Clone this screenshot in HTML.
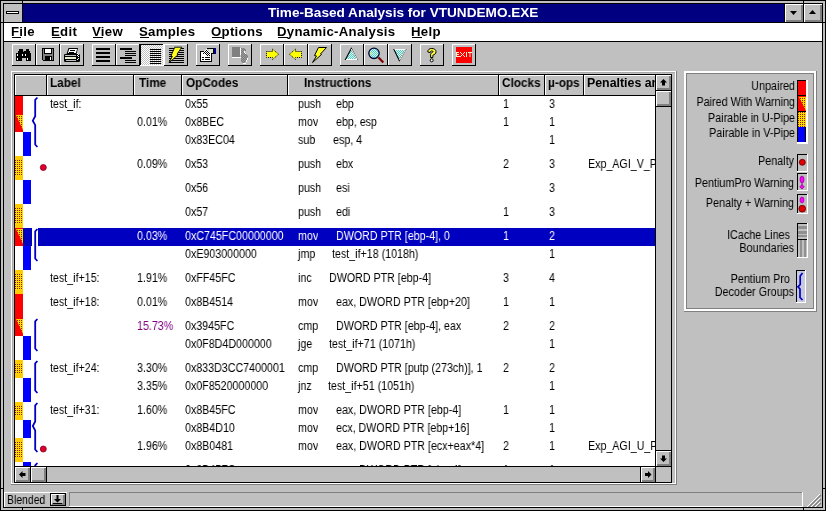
<!DOCTYPE html><html><head><meta charset="utf-8"><style>*{margin:0;padding:0}
html,body{width:826px;height:511px;overflow:hidden;background:#c0c0c0}
body{position:relative;font-family:"Liberation Sans",sans-serif}
div,svg{position:absolute}
.t{white-space:pre;transform-origin:0 0;will-change:transform}
</style></head><body><div style="left:0px;top:0px;width:826px;height:511px;background:#c0c0c0;"></div>
<div style="left:0px;top:0px;width:826px;height:1px;background:#000000;"></div>
<div style="left:0px;top:510px;width:826px;height:1px;background:#000000;"></div>
<div style="left:0px;top:0px;width:1px;height:511px;background:#000000;"></div>
<div style="left:825px;top:0px;width:1px;height:511px;background:#000000;"></div>
<div style="left:3px;top:3px;width:820px;height:1px;background:#000000;"></div>
<div style="left:3px;top:507px;width:820px;height:1px;background:#000000;"></div>
<div style="left:3px;top:3px;width:1px;height:505px;background:#000000;"></div>
<div style="left:822px;top:3px;width:1px;height:505px;background:#000000;"></div>
<div style="left:22px;top:0px;width:1px;height:4px;background:#000000;"></div>
<div style="left:803px;top:0px;width:1px;height:4px;background:#000000;"></div>
<div style="left:22px;top:507px;width:1px;height:4px;background:#000000;"></div>
<div style="left:803px;top:507px;width:1px;height:4px;background:#000000;"></div>
<div style="left:0px;top:22px;width:4px;height:1px;background:#000000;"></div>
<div style="left:822px;top:22px;width:4px;height:1px;background:#000000;"></div>
<div style="left:0px;top:488px;width:4px;height:1px;background:#000000;"></div>
<div style="left:822px;top:488px;width:4px;height:1px;background:#000000;"></div>
<div style="left:4px;top:4px;width:818px;height:18px;background:#000080;"></div>
<div style="left:4px;top:4px;width:18px;height:18px;background:#c0c0c0;"></div>
<div style="left:22px;top:4px;width:1px;height:18px;background:#000000;"></div>
<div style="left:6px;top:11px;width:13px;height:3px;background:#000000;"></div>
<div style="left:7px;top:12px;width:11px;height:1px;background:#ffffff;"></div>
<div style="left:784px;top:4px;width:1px;height:18px;background:#000000;"></div>
<div style="left:785px;top:4px;width:18px;height:18px;background:#c0c0c0;"></div>
<div style="left:785px;top:4px;width:18px;height:1px;background:#ffffff;"></div>
<div style="left:785px;top:4px;width:1px;height:18px;background:#ffffff;"></div>
<div style="left:801px;top:5px;width:2px;height:17px;background:#808080;"></div>
<div style="left:786px;top:20px;width:17px;height:2px;background:#808080;"></div>
<div style="left:804px;top:4px;width:18px;height:18px;background:#c0c0c0;"></div>
<div style="left:804px;top:4px;width:18px;height:1px;background:#ffffff;"></div>
<div style="left:804px;top:4px;width:1px;height:18px;background:#ffffff;"></div>
<div style="left:820px;top:5px;width:2px;height:17px;background:#808080;"></div>
<div style="left:805px;top:20px;width:17px;height:2px;background:#808080;"></div>
<div style="left:803px;top:4px;width:1px;height:18px;background:#000000;"></div>
<div style="left:4px;top:22px;width:818px;height:1px;background:#000000;"></div>
<svg style="left:785px;top:4px" width="40" height="18"><path d="M5 7h7l-3.5 4z M24 10h7l-3.5 -4z" fill="#000"/></svg>
<div class="t" style="left:268px;top:6.49px;font-size:13.6px;line-height:13.6px;font-weight:bold;color:#fff;transform:scaleX(1.0);">Time-Based Analysis for VTUNDEMO.EXE</div>
<div style="left:4px;top:23px;width:818px;height:18px;background:#ffffff;"></div>
<div style="left:4px;top:41px;width:818px;height:1px;background:#000000;"></div>
<div class="t" style="left:11.3px;top:24.83px;font-size:13.2px;line-height:13.2px;font-weight:bold;color:#000;transform:scaleX(1.0);letter-spacing:0.3px">File</div>
<div class="t" style="left:51.3px;top:24.83px;font-size:13.2px;line-height:13.2px;font-weight:bold;color:#000;transform:scaleX(1.0);letter-spacing:0.3px">Edit</div>
<div class="t" style="left:92.3px;top:24.83px;font-size:13.2px;line-height:13.2px;font-weight:bold;color:#000;transform:scaleX(1.0);letter-spacing:0.3px">View</div>
<div class="t" style="left:139.3px;top:24.83px;font-size:13.2px;line-height:13.2px;font-weight:bold;color:#000;transform:scaleX(1.0);letter-spacing:0.3px">Samples</div>
<div class="t" style="left:211.3px;top:24.83px;font-size:13.2px;line-height:13.2px;font-weight:bold;color:#000;transform:scaleX(1.0);letter-spacing:0.3px">Options</div>
<div class="t" style="left:277.3px;top:24.83px;font-size:13.2px;line-height:13.2px;font-weight:bold;color:#000;transform:scaleX(1.0);letter-spacing:0.3px">Dynamic-Analysis</div>
<div class="t" style="left:411.3px;top:24.83px;font-size:13.2px;line-height:13.2px;font-weight:bold;color:#000;transform:scaleX(1.0);letter-spacing:0.3px">Help</div>
<div style="left:12px;top:37px;width:9px;height:1px;background:#000000;"></div>
<div style="left:52px;top:37px;width:9px;height:1px;background:#000000;"></div>
<div style="left:93px;top:37px;width:10px;height:1px;background:#000000;"></div>
<div style="left:140px;top:37px;width:9px;height:1px;background:#000000;"></div>
<div style="left:212px;top:37px;width:10px;height:1px;background:#000000;"></div>
<div style="left:278px;top:37px;width:10px;height:1px;background:#000000;"></div>
<div style="left:412px;top:37px;width:10px;height:1px;background:#000000;"></div>
<div style="left:12px;top:44px;width:24px;height:22px;background:#c0c0c0;"></div>
<div style="left:12px;top:44px;width:24px;height:1px;background:#ffffff;"></div>
<div style="left:12px;top:44px;width:1px;height:22px;background:#ffffff;"></div>
<div style="left:12px;top:65px;width:24px;height:1px;background:#000000;"></div>
<div style="left:35px;top:44px;width:1px;height:22px;background:#000000;"></div>
<div style="left:36px;top:44px;width:24px;height:22px;background:#c0c0c0;"></div>
<div style="left:36px;top:44px;width:24px;height:1px;background:#ffffff;"></div>
<div style="left:36px;top:44px;width:1px;height:22px;background:#ffffff;"></div>
<div style="left:36px;top:65px;width:24px;height:1px;background:#000000;"></div>
<div style="left:59px;top:44px;width:1px;height:22px;background:#000000;"></div>
<div style="left:60px;top:44px;width:24px;height:22px;background:#c0c0c0;"></div>
<div style="left:60px;top:44px;width:24px;height:1px;background:#ffffff;"></div>
<div style="left:60px;top:44px;width:1px;height:22px;background:#ffffff;"></div>
<div style="left:60px;top:65px;width:24px;height:1px;background:#000000;"></div>
<div style="left:83px;top:44px;width:1px;height:22px;background:#000000;"></div>
<div style="left:92px;top:44px;width:24px;height:22px;background:#c0c0c0;"></div>
<div style="left:92px;top:44px;width:24px;height:1px;background:#ffffff;"></div>
<div style="left:92px;top:44px;width:1px;height:22px;background:#ffffff;"></div>
<div style="left:92px;top:65px;width:24px;height:1px;background:#000000;"></div>
<div style="left:115px;top:44px;width:1px;height:22px;background:#000000;"></div>
<div style="left:116px;top:44px;width:24px;height:22px;background:#c0c0c0;"></div>
<div style="left:116px;top:44px;width:24px;height:1px;background:#ffffff;"></div>
<div style="left:116px;top:44px;width:1px;height:22px;background:#ffffff;"></div>
<div style="left:116px;top:65px;width:24px;height:1px;background:#000000;"></div>
<div style="left:139px;top:44px;width:1px;height:22px;background:#000000;"></div>
<div style="left:140px;top:44px;width:24px;height:22px;background:#c0c0c0;"></div>
<div style="left:141px;top:45px;width:22px;height:20px;background-image:linear-gradient(45deg,#fff 25%,transparent 25%,transparent 75%,#fff 75%),linear-gradient(45deg,#fff 25%,transparent 25%,transparent 75%,#fff 75%);background-size:2px 2px;background-position:0 0,1px 1px;background-color:#c0c0c0"></div>
<div style="left:140px;top:44px;width:24px;height:1px;background:#000000;"></div>
<div style="left:140px;top:44px;width:1px;height:22px;background:#000000;"></div>
<div style="left:140px;top:65px;width:24px;height:1px;background:#ffffff;"></div>
<div style="left:163px;top:44px;width:1px;height:22px;background:#ffffff;"></div>
<div style="left:164px;top:44px;width:24px;height:22px;background:#c0c0c0;"></div>
<div style="left:164px;top:44px;width:24px;height:1px;background:#ffffff;"></div>
<div style="left:164px;top:44px;width:1px;height:22px;background:#ffffff;"></div>
<div style="left:164px;top:65px;width:24px;height:1px;background:#000000;"></div>
<div style="left:187px;top:44px;width:1px;height:22px;background:#000000;"></div>
<div style="left:196px;top:44px;width:24px;height:22px;background:#c0c0c0;"></div>
<div style="left:196px;top:44px;width:24px;height:1px;background:#ffffff;"></div>
<div style="left:196px;top:44px;width:1px;height:22px;background:#ffffff;"></div>
<div style="left:196px;top:65px;width:24px;height:1px;background:#000000;"></div>
<div style="left:219px;top:44px;width:1px;height:22px;background:#000000;"></div>
<div style="left:228px;top:44px;width:24px;height:22px;background:#c0c0c0;"></div>
<div style="left:228px;top:44px;width:24px;height:1px;background:#ffffff;"></div>
<div style="left:228px;top:44px;width:1px;height:22px;background:#ffffff;"></div>
<div style="left:228px;top:65px;width:24px;height:1px;background:#000000;"></div>
<div style="left:251px;top:44px;width:1px;height:22px;background:#000000;"></div>
<div style="left:260px;top:44px;width:24px;height:22px;background:#c0c0c0;"></div>
<div style="left:260px;top:44px;width:24px;height:1px;background:#ffffff;"></div>
<div style="left:260px;top:44px;width:1px;height:22px;background:#ffffff;"></div>
<div style="left:260px;top:65px;width:24px;height:1px;background:#000000;"></div>
<div style="left:283px;top:44px;width:1px;height:22px;background:#000000;"></div>
<div style="left:284px;top:44px;width:24px;height:22px;background:#c0c0c0;"></div>
<div style="left:284px;top:44px;width:24px;height:1px;background:#ffffff;"></div>
<div style="left:284px;top:44px;width:1px;height:22px;background:#ffffff;"></div>
<div style="left:284px;top:65px;width:24px;height:1px;background:#000000;"></div>
<div style="left:307px;top:44px;width:1px;height:22px;background:#000000;"></div>
<div style="left:308px;top:44px;width:24px;height:22px;background:#c0c0c0;"></div>
<div style="left:308px;top:44px;width:24px;height:1px;background:#ffffff;"></div>
<div style="left:308px;top:44px;width:1px;height:22px;background:#ffffff;"></div>
<div style="left:308px;top:65px;width:24px;height:1px;background:#000000;"></div>
<div style="left:331px;top:44px;width:1px;height:22px;background:#000000;"></div>
<div style="left:340px;top:44px;width:24px;height:22px;background:#c0c0c0;"></div>
<div style="left:340px;top:44px;width:24px;height:1px;background:#ffffff;"></div>
<div style="left:340px;top:44px;width:1px;height:22px;background:#ffffff;"></div>
<div style="left:340px;top:65px;width:24px;height:1px;background:#000000;"></div>
<div style="left:363px;top:44px;width:1px;height:22px;background:#000000;"></div>
<div style="left:364px;top:44px;width:24px;height:22px;background:#c0c0c0;"></div>
<div style="left:364px;top:44px;width:24px;height:1px;background:#ffffff;"></div>
<div style="left:364px;top:44px;width:1px;height:22px;background:#ffffff;"></div>
<div style="left:364px;top:65px;width:24px;height:1px;background:#000000;"></div>
<div style="left:387px;top:44px;width:1px;height:22px;background:#000000;"></div>
<div style="left:388px;top:44px;width:24px;height:22px;background:#c0c0c0;"></div>
<div style="left:388px;top:44px;width:24px;height:1px;background:#ffffff;"></div>
<div style="left:388px;top:44px;width:1px;height:22px;background:#ffffff;"></div>
<div style="left:388px;top:65px;width:24px;height:1px;background:#000000;"></div>
<div style="left:411px;top:44px;width:1px;height:22px;background:#000000;"></div>
<div style="left:420px;top:44px;width:24px;height:22px;background:#c0c0c0;"></div>
<div style="left:420px;top:44px;width:24px;height:1px;background:#ffffff;"></div>
<div style="left:420px;top:44px;width:1px;height:22px;background:#ffffff;"></div>
<div style="left:420px;top:65px;width:24px;height:1px;background:#000000;"></div>
<div style="left:443px;top:44px;width:1px;height:22px;background:#000000;"></div>
<div style="left:452px;top:44px;width:24px;height:22px;background:#c0c0c0;"></div>
<div style="left:452px;top:44px;width:24px;height:1px;background:#ffffff;"></div>
<div style="left:452px;top:44px;width:1px;height:22px;background:#ffffff;"></div>
<div style="left:452px;top:65px;width:24px;height:1px;background:#000000;"></div>
<div style="left:475px;top:44px;width:1px;height:22px;background:#000000;"></div>
<svg style="left:12px;top:44px" width="24" height="22"><path d="M7 5h4v2h-4z M14 5h3v2h-3z M6 7h12v2h-12z M4 9h6v8h-6z M14 9h5v8h-5z M9 9h5v5h-5z" fill="#000"/><path d="M5 10h1v2h-1z M5 14h1v2h-1z M10 10h1v2h-1z M13 10h1v2h-1z M15 14h1v2h-1z" fill="#fff"/><rect x="11" y="7" width="1" height="1" fill="#808080"/></svg>
<svg style="left:36px;top:44px" width="24" height="22"><rect x="6" y="4" width="12" height="13" fill="#000"/><rect x="7" y="5" width="10" height="11" fill="#808080"/><rect x="8" y="5" width="8" height="5" fill="#000"/><rect x="9" y="5" width="6" height="4" fill="#fff"/><rect x="9" y="12" width="7" height="5" fill="#000"/><rect x="14" y="13" width="1" height="3" fill="#fff"/><rect x="6" y="16" width="1" height="1" fill="#c0c0c0"/></svg>
<svg style="left:60px;top:44px" width="24" height="22"><path d="M8.5 4h9.5l-1.5 6h-10z" fill="#000"/><path d="M9.3 5h7.8l-1.2 4h-8z" fill="#fff"/><rect x="10" y="6" width="5" height="1" fill="#000"/><rect x="9" y="8" width="5" height="1" fill="#000"/><rect x="4" y="10" width="16" height="8" rx="1.2" fill="#000"/><rect x="5" y="11" width="11" height="1" fill="#c0c0c0"/><rect x="5" y="13" width="11" height="2" fill="#e8ecd0"/><rect x="6" y="16" width="10" height="1" fill="#c0c0c0"/><path d="M17 9h1v1h-1z M18 10h1v1h-1z M17 11h1v1h-1z M18 12h1v1h-1z M17 15h1v1h-1z M18 14h1v1h-1z" fill="#fff"/></svg>
<svg style="left:92px;top:44px" width="24" height="22"><path d="M4 4h14v2h-14z M4 8h14v2h-14z M4 12h14v2h-14z M4 16h14v2h-14z" fill="#000"/></svg>
<svg style="left:116px;top:44px" width="24" height="22"><path d="M4 4h12v2h-12z M9 7h11v1h-11z M9 9h11v1h-11z M9 11h11v1h-11z M4 13h12v2h-12z M9 16h11v1h-11z M9 18h11v1h-11z" fill="#000"/></svg>
<svg style="left:140px;top:44px" width="24" height="22"><path d="M10 5h11v1h-11z M10 7h11v1h-11z M10 9h11v1h-11z M10 11h11v1h-11z M10 13h11v1h-11z M10 15h11v1h-11z M10 17h11v1h-11z M10 19h11v1h-11z" fill="#000"/></svg>
<svg style="left:164px;top:44px" width="24" height="22"><path d="M5 4h15v1h-15z M5 6h15v1h-15z M5 8h15v1h-15z M5 10h15v1h-15z M5 12h15v1h-15z M5 14h15v1h-15z M5 16h15v1h-15z M5 18h15v1h-15z" fill="#000"/><path d="M10.8 3.2L17.8 3.2L13 10.2L14.2 10.6L5 18.8L8.3 12.2L7 11.8Z" fill="#ffff20" stroke="#000" stroke-width="0.9"/></svg>
<svg style="left:196px;top:44px" width="24" height="22"><rect x="4" y="7" width="12" height="11" fill="#000"/><rect x="5" y="8" width="10" height="9" fill="#fff"/><rect x="11" y="4" width="6" height="1" fill="#000"/><rect x="13" y="5" width="4" height="4" fill="#d8e4cc"/><rect x="13" y="9" width="4" height="1" fill="#000"/><rect x="17" y="4" width="1" height="6" fill="#000"/><rect x="18" y="4" width="2" height="6" fill="#000080"/><rect x="10" y="5" width="1" height="1" fill="#fff"/><rect x="9" y="6" width="1" height="1" fill="#fff"/><rect x="10" y="6" width="1" height="1" fill="#000"/><rect x="11" y="6" width="1" height="1" fill="#fff"/><rect x="8" y="7" width="1" height="1" fill="#fff"/><rect x="9" y="7" width="1" height="1" fill="#000"/><rect x="10" y="7" width="1" height="1" fill="#fff"/><rect x="11" y="7" width="1" height="1" fill="#000"/><rect x="12" y="7" width="1" height="1" fill="#fff"/><rect x="7" y="8" width="1" height="1" fill="#fff"/><rect x="8" y="8" width="1" height="1" fill="#000"/><rect x="9" y="8" width="1" height="1" fill="#fff"/><rect x="10" y="8" width="1" height="1" fill="#000"/><rect x="11" y="8" width="1" height="1" fill="#fff"/><rect x="12" y="8" width="1" height="1" fill="#000"/><rect x="13" y="8" width="1" height="1" fill="#fff"/><rect x="6" y="9" width="1" height="1" fill="#fff"/><rect x="7" y="9" width="1" height="1" fill="#000"/><rect x="8" y="9" width="1" height="1" fill="#fff"/><rect x="9" y="9" width="1" height="1" fill="#000"/><rect x="10" y="9" width="1" height="1" fill="#fff"/><rect x="11" y="9" width="1" height="1" fill="#000"/><rect x="12" y="9" width="1" height="1" fill="#fff"/><rect x="13" y="9" width="1" height="1" fill="#000"/><rect x="14" y="9" width="1" height="1" fill="#fff"/><rect x="9" y="10" width="1" height="1" fill="#fff"/><rect x="10" y="10" width="1" height="1" fill="#000"/><rect x="11" y="10" width="1" height="1" fill="#fff"/><rect x="12" y="10" width="1" height="1" fill="#000"/><rect x="13" y="10" width="1" height="1" fill="#fff"/><rect x="11" y="11" width="1" height="1" fill="#000"/><rect x="12" y="11" width="1" height="1" fill="#fff"/><rect x="13" y="11" width="1" height="1" fill="#000"/><rect x="6" y="13" width="2" height="1" fill="#000"/><rect x="9" y="13" width="5" height="1" fill="#000"/><rect x="6" y="15" width="2" height="1" fill="#000"/><rect x="9" y="15" width="5" height="1" fill="#000"/></svg>
<svg style="left:228px;top:44px" width="24" height="22"><rect x="4" y="3" width="8" height="10" fill="#808080"/><rect x="4" y="13" width="9" height="1" fill="#fff"/><rect x="12" y="4" width="1" height="7" fill="#fff"/><rect x="13" y="4" width="4" height="1" fill="#7c7c7c"/><rect x="14" y="4" width="1" height="1" fill="#9a9a9a"/><rect x="16" y="4" width="1" height="1" fill="#9a9a9a"/><rect x="13" y="5" width="5" height="1" fill="#7c7c7c"/><rect x="13" y="5" width="1" height="1" fill="#9a9a9a"/><rect x="15" y="5" width="1" height="1" fill="#9a9a9a"/><rect x="17" y="5" width="1" height="1" fill="#9a9a9a"/><rect x="13" y="6" width="5" height="1" fill="#7c7c7c"/><rect x="14" y="6" width="1" height="1" fill="#9a9a9a"/><rect x="16" y="6" width="1" height="1" fill="#9a9a9a"/><rect x="13" y="7" width="3" height="1" fill="#7c7c7c"/><rect x="13" y="7" width="1" height="1" fill="#9a9a9a"/><rect x="15" y="7" width="1" height="1" fill="#9a9a9a"/><rect x="13" y="8" width="3" height="1" fill="#7c7c7c"/><rect x="14" y="8" width="1" height="1" fill="#9a9a9a"/><rect x="13" y="9" width="4" height="1" fill="#7c7c7c"/><rect x="13" y="9" width="1" height="1" fill="#9a9a9a"/><rect x="15" y="9" width="1" height="1" fill="#9a9a9a"/><rect x="13" y="10" width="6" height="1" fill="#7c7c7c"/><rect x="14" y="10" width="1" height="1" fill="#9a9a9a"/><rect x="16" y="10" width="1" height="1" fill="#9a9a9a"/><rect x="18" y="10" width="1" height="1" fill="#9a9a9a"/><rect x="13" y="11" width="7" height="1" fill="#7c7c7c"/><rect x="13" y="11" width="1" height="1" fill="#9a9a9a"/><rect x="15" y="11" width="1" height="1" fill="#9a9a9a"/><rect x="17" y="11" width="1" height="1" fill="#9a9a9a"/><rect x="19" y="11" width="1" height="1" fill="#9a9a9a"/><rect x="13" y="12" width="7" height="1" fill="#7c7c7c"/><rect x="14" y="12" width="1" height="1" fill="#9a9a9a"/><rect x="16" y="12" width="1" height="1" fill="#9a9a9a"/><rect x="18" y="12" width="1" height="1" fill="#9a9a9a"/><rect x="13" y="13" width="7" height="1" fill="#7c7c7c"/><rect x="13" y="13" width="1" height="1" fill="#9a9a9a"/><rect x="15" y="13" width="1" height="1" fill="#9a9a9a"/><rect x="17" y="13" width="1" height="1" fill="#9a9a9a"/><rect x="19" y="13" width="1" height="1" fill="#9a9a9a"/><rect x="13" y="14" width="6" height="1" fill="#7c7c7c"/><rect x="14" y="14" width="1" height="1" fill="#9a9a9a"/><rect x="16" y="14" width="1" height="1" fill="#9a9a9a"/><rect x="18" y="14" width="1" height="1" fill="#9a9a9a"/><rect x="13" y="15" width="6" height="1" fill="#7c7c7c"/><rect x="13" y="15" width="1" height="1" fill="#9a9a9a"/><rect x="15" y="15" width="1" height="1" fill="#9a9a9a"/><rect x="17" y="15" width="1" height="1" fill="#9a9a9a"/><rect x="13" y="16" width="5" height="1" fill="#7c7c7c"/><rect x="14" y="16" width="1" height="1" fill="#9a9a9a"/><rect x="16" y="16" width="1" height="1" fill="#9a9a9a"/><rect x="13" y="17" width="5" height="1" fill="#7c7c7c"/><rect x="13" y="17" width="1" height="1" fill="#9a9a9a"/><rect x="15" y="17" width="1" height="1" fill="#9a9a9a"/><rect x="17" y="17" width="1" height="1" fill="#9a9a9a"/><rect x="14" y="18" width="3" height="1" fill="#7c7c7c"/><rect x="14" y="18" width="1" height="1" fill="#9a9a9a"/><rect x="16" y="18" width="1" height="1" fill="#9a9a9a"/><rect x="16" y="7" width="1" height="2" fill="#fff"/><rect x="17" y="9" width="1" height="1" fill="#fff"/><rect x="19" y="14" width="1" height="2" fill="#fff"/><rect x="18" y="16" width="1" height="2" fill="#fff"/><rect x="15" y="19" width="3" height="1" fill="#fff"/></svg>
<svg style="left:260px;top:44px" width="24" height="22"><path d="M6.5 7.5h6v-2.5l6 5.3-6 5.2v-2h-6z" fill="#ffff00" stroke="#000" stroke-width="1" stroke-dasharray="1 1"/></svg>
<svg style="left:284px;top:44px" width="24" height="22"><path d="M17.5 7.5h-6v-2.5l-6 5.3 6 5.2v-2h6z" fill="#ffff00" stroke="#000" stroke-width="1" stroke-dasharray="1 1"/></svg>
<svg style="left:308px;top:44px" width="24" height="22"><path d="M10.5 3.5L18.5 3.5L12.5 10L13.5 10.5L4.5 18.5L8.5 12L6.5 11.5Z" fill="#ffff20" stroke="#000" stroke-width="1"/></svg>
<svg style="left:340px;top:44px" width="24" height="22"><defs><pattern id="cy" width="2" height="2" patternUnits="userSpaceOnUse"><rect width="2" height="2" fill="#d8f8f0"/><rect width="1" height="1" fill="#50d0c8"/><rect x="1" y="1" width="1" height="1" fill="#50d0c8"/></pattern></defs><path d="M11.3 4.5L5.5 15.5H17z" fill="url(#cy)" stroke="#000" stroke-width="1.1"/><path d="M11.3 5L17 15.5H6" fill="none" stroke="#fff" stroke-width="1"/></svg>
<svg style="left:364px;top:44px" width="24" height="22"><path d="M14.5 13.5l4.8 5" stroke="#800000" stroke-width="2.2"/><circle cx="10" cy="9.3" r="5.2" fill="url(#cy)" stroke="#000030" stroke-width="1.3"/><rect x="6" y="8" width="2" height="3" fill="#e0f080" opacity="0.6"/></svg>
<svg style="left:388px;top:44px" width="24" height="22"><path d="M6 5.5H17.5L11.3 16.5z" fill="url(#cy)" stroke="#000" stroke-width="1.1"/><path d="M6.5 5.5H17.5L11.5 16" fill="none" stroke="#fff" stroke-width="1"/></svg>
<svg style="left:420px;top:44px" width="24" height="22"><path d="M7.8 8C7.8 5.4 9.5 4.5 11.8 4.5C14.3 4.5 16 5.6 16 7.8C16 9.7 14.6 10.5 12.9 11.2V13.5H10.6V10.3C10.6 9.4 11.4 8.9 12.4 8.4C13.3 8 13.4 6.9 11.8 6.9C10.7 6.9 10.2 7.5 10.2 8.5Z" fill="#ffff40" stroke="#000" stroke-width="1"/><circle cx="11.7" cy="16.3" r="1.5" fill="#fffff0" stroke="#000" stroke-width="1"/></svg>
<svg style="left:452px;top:44px" width="24" height="22"><rect x="4" y="3" width="16" height="16" fill="#ff0000"/><path d="M4 8h3v1h-2v1h2v1h-2v1h3v1h-4z M8 8h1v1h1v1h1v-1h1v-1h1v1h-1v1h-1v1h1v1h1v1h-1v-1h-1v-1h-1v1h-1v1h-1v-1h1v-1h1v-1h-1v-1h-1z M14 8h1v5h-1z M16 8h4v1h-1.5v4h-1v-4h-1.5z" fill="#f8f0d0"/></svg>
<div style="left:11px;top:71px;width:665px;height:1px;background:#ffffff;"></div>
<div style="left:11px;top:483px;width:665px;height:1px;background:#ffffff;"></div>
<div style="left:11px;top:71px;width:1px;height:413px;background:#ffffff;"></div>
<div style="left:675px;top:71px;width:1px;height:413px;background:#ffffff;"></div>
<div style="left:12px;top:72px;width:663px;height:1px;background:#a8a8a8;"></div>
<div style="left:12px;top:72px;width:1px;height:411px;background:#a8a8a8;"></div>
<div style="left:11px;top:484px;width:666px;height:1px;background:#808080;"></div>
<div style="left:676px;top:71px;width:1px;height:414px;background:#808080;"></div>
<div style="left:14px;top:74px;width:658px;height:1px;background:#000000;"></div>
<div style="left:14px;top:482px;width:658px;height:1px;background:#000000;"></div>
<div style="left:14px;top:74px;width:1px;height:409px;background:#000000;"></div>
<div style="left:671px;top:74px;width:1px;height:409px;background:#000000;"></div>
<div style="left:15px;top:75px;width:640px;height:391px;background:#ffffff;"></div>
<div style="left:15px;top:95px;width:640px;height:1px;background:#000000;"></div>
<div style="left:15px;top:75px;width:32px;height:20px;background:#c0c0c0;"></div>
<div style="left:15px;top:75px;width:32px;height:1px;background:#ffffff;"></div>
<div style="left:15px;top:75px;width:1px;height:20px;background:#ffffff;"></div>
<div style="left:46px;top:75px;width:1px;height:20px;background:#000000;"></div>
<div style="left:47px;top:75px;width:87px;height:20px;background:#c0c0c0;"></div>
<div style="left:47px;top:75px;width:87px;height:1px;background:#ffffff;"></div>
<div style="left:47px;top:75px;width:1px;height:20px;background:#ffffff;"></div>
<div style="left:133px;top:75px;width:1px;height:20px;background:#000000;"></div>
<div style="left:134px;top:75px;width:48px;height:20px;background:#c0c0c0;"></div>
<div style="left:134px;top:75px;width:48px;height:1px;background:#ffffff;"></div>
<div style="left:134px;top:75px;width:1px;height:20px;background:#ffffff;"></div>
<div style="left:181px;top:75px;width:1px;height:20px;background:#000000;"></div>
<div style="left:182px;top:75px;width:106px;height:20px;background:#c0c0c0;"></div>
<div style="left:182px;top:75px;width:106px;height:1px;background:#ffffff;"></div>
<div style="left:182px;top:75px;width:1px;height:20px;background:#ffffff;"></div>
<div style="left:287px;top:75px;width:1px;height:20px;background:#000000;"></div>
<div style="left:288px;top:75px;width:211px;height:20px;background:#c0c0c0;"></div>
<div style="left:288px;top:75px;width:211px;height:1px;background:#ffffff;"></div>
<div style="left:288px;top:75px;width:1px;height:20px;background:#ffffff;"></div>
<div style="left:498px;top:75px;width:1px;height:20px;background:#000000;"></div>
<div style="left:499px;top:75px;width:46px;height:20px;background:#c0c0c0;"></div>
<div style="left:499px;top:75px;width:46px;height:1px;background:#ffffff;"></div>
<div style="left:499px;top:75px;width:1px;height:20px;background:#ffffff;"></div>
<div style="left:544px;top:75px;width:1px;height:20px;background:#000000;"></div>
<div style="left:545px;top:75px;width:39px;height:20px;background:#c0c0c0;"></div>
<div style="left:545px;top:75px;width:39px;height:1px;background:#ffffff;"></div>
<div style="left:545px;top:75px;width:1px;height:20px;background:#ffffff;"></div>
<div style="left:583px;top:75px;width:1px;height:20px;background:#000000;"></div>
<div style="left:584px;top:75px;width:71px;height:20px;background:#c0c0c0;"></div>
<div style="left:584px;top:75px;width:71px;height:1px;background:#ffffff;"></div>
<div style="left:584px;top:75px;width:1px;height:20px;background:#ffffff;"></div>
<div style="left:15px;top:75px;width:640px;height:20px;overflow:hidden">
<div class="t" style="left:35.0px;top:1.7400000000000055px;font-size:12px;line-height:12px;font-weight:bold;color:#000;transform:scaleX(0.98);">Label</div>
<div class="t" style="left:123.5px;top:1.7400000000000055px;font-size:12px;line-height:12px;font-weight:bold;color:#000;transform:scaleX(0.98);">Time</div>
<div class="t" style="left:170.5px;top:1.7400000000000055px;font-size:12px;line-height:12px;font-weight:bold;color:#000;transform:scaleX(0.98);">OpCodes</div>
<div class="t" style="left:288.5px;top:1.7400000000000055px;font-size:12px;line-height:12px;font-weight:bold;color:#000;transform:scaleX(0.98);">Instructions</div>
<div class="t" style="left:487.0px;top:1.7400000000000055px;font-size:12px;line-height:12px;font-weight:bold;color:#000;transform:scaleX(0.98);">Clocks</div>
<div class="t" style="left:533.0px;top:1.7400000000000055px;font-size:12px;line-height:12px;font-weight:bold;color:#000;transform:scaleX(0.98);">µ-ops</div>
<div class="t" style="left:572.0px;top:1.7400000000000055px;font-size:12px;line-height:12px;font-weight:bold;color:#000;transform:scaleX(1.03);">Penalties and</div>
</div>
<div style="left:15px;top:96px;width:640px;height:370px;overflow:hidden">
<div style="left:8px;top:132px;width:9px;height:18px;background:#0000c0;"></div>
<div style="left:23px;top:132px;width:617px;height:18px;background:#0000c0;"></div>
<div class="t" style="left:35.2px;top:2.34px;font-size:12px;line-height:12px;font-weight:normal;color:#000;transform:scaleX(0.89);">test_if:</div>
<div class="t" style="left:170.2px;top:2.34px;font-size:12px;line-height:12px;font-weight:normal;color:#000;transform:scaleX(0.89);">0x55</div>
<div class="t" style="left:282.7px;top:2.34px;font-size:12px;line-height:12px;font-weight:normal;color:#000;transform:scaleX(0.89);">push</div>
<div class="t" style="left:320.5px;top:2.34px;font-size:12px;line-height:12px;font-weight:normal;color:#000;transform:scaleX(0.89);">ebp</div>
<div class="t" style="left:487.7px;top:2.34px;font-size:12px;line-height:12px;font-weight:normal;color:#000;transform:scaleX(0.89);">1</div>
<div class="t" style="left:533.7px;top:2.34px;font-size:12px;line-height:12px;font-weight:normal;color:#000;transform:scaleX(0.89);">3</div>
<div class="t" style="left:122.2px;top:20.34px;font-size:12px;line-height:12px;font-weight:normal;color:#000;transform:scaleX(0.89);">0.01%</div>
<div class="t" style="left:170.2px;top:20.34px;font-size:12px;line-height:12px;font-weight:normal;color:#000;transform:scaleX(0.89);">0x8BEC</div>
<div class="t" style="left:282.7px;top:20.34px;font-size:12px;line-height:12px;font-weight:normal;color:#000;transform:scaleX(0.89);">mov</div>
<div class="t" style="left:320.5px;top:20.34px;font-size:12px;line-height:12px;font-weight:normal;color:#000;transform:scaleX(0.89);">ebp, esp</div>
<div class="t" style="left:487.7px;top:20.34px;font-size:12px;line-height:12px;font-weight:normal;color:#000;transform:scaleX(0.89);">1</div>
<div class="t" style="left:533.7px;top:20.34px;font-size:12px;line-height:12px;font-weight:normal;color:#000;transform:scaleX(0.89);">1</div>
<div class="t" style="left:170.2px;top:38.34px;font-size:12px;line-height:12px;font-weight:normal;color:#000;transform:scaleX(0.89);">0x83EC04</div>
<div class="t" style="left:282.7px;top:38.34px;font-size:12px;line-height:12px;font-weight:normal;color:#000;transform:scaleX(0.89);">sub</div>
<div class="t" style="left:317.59999999999997px;top:38.34px;font-size:12px;line-height:12px;font-weight:normal;color:#000;transform:scaleX(0.89);">esp, 4</div>
<div class="t" style="left:533.7px;top:38.34px;font-size:12px;line-height:12px;font-weight:normal;color:#000;transform:scaleX(0.89);">1</div>
<div class="t" style="left:122.2px;top:62.34px;font-size:12px;line-height:12px;font-weight:normal;color:#000;transform:scaleX(0.89);">0.09%</div>
<div class="t" style="left:170.2px;top:62.34px;font-size:12px;line-height:12px;font-weight:normal;color:#000;transform:scaleX(0.89);">0x53</div>
<div class="t" style="left:282.7px;top:62.34px;font-size:12px;line-height:12px;font-weight:normal;color:#000;transform:scaleX(0.89);">push</div>
<div class="t" style="left:320.5px;top:62.34px;font-size:12px;line-height:12px;font-weight:normal;color:#000;transform:scaleX(0.89);">ebx</div>
<div class="t" style="left:487.7px;top:62.34px;font-size:12px;line-height:12px;font-weight:normal;color:#000;transform:scaleX(0.89);">2</div>
<div class="t" style="left:533.7px;top:62.34px;font-size:12px;line-height:12px;font-weight:normal;color:#000;transform:scaleX(0.89);">3</div>
<div class="t" style="left:572.7px;top:62.34px;font-size:12px;line-height:12px;font-weight:normal;color:#000;transform:scaleX(0.89);">Exp_AGI_V_P</div>
<div class="t" style="left:170.2px;top:86.34px;font-size:12px;line-height:12px;font-weight:normal;color:#000;transform:scaleX(0.89);">0x56</div>
<div class="t" style="left:282.7px;top:86.34px;font-size:12px;line-height:12px;font-weight:normal;color:#000;transform:scaleX(0.89);">push</div>
<div class="t" style="left:320.5px;top:86.34px;font-size:12px;line-height:12px;font-weight:normal;color:#000;transform:scaleX(0.89);">esi</div>
<div class="t" style="left:533.7px;top:86.34px;font-size:12px;line-height:12px;font-weight:normal;color:#000;transform:scaleX(0.89);">3</div>
<div class="t" style="left:170.2px;top:110.34px;font-size:12px;line-height:12px;font-weight:normal;color:#000;transform:scaleX(0.89);">0x57</div>
<div class="t" style="left:282.7px;top:110.34px;font-size:12px;line-height:12px;font-weight:normal;color:#000;transform:scaleX(0.89);">push</div>
<div class="t" style="left:320.5px;top:110.34px;font-size:12px;line-height:12px;font-weight:normal;color:#000;transform:scaleX(0.89);">edi</div>
<div class="t" style="left:487.7px;top:110.34px;font-size:12px;line-height:12px;font-weight:normal;color:#000;transform:scaleX(0.89);">1</div>
<div class="t" style="left:533.7px;top:110.34px;font-size:12px;line-height:12px;font-weight:normal;color:#000;transform:scaleX(0.89);">3</div>
<div class="t" style="left:122.2px;top:134.34px;font-size:12px;line-height:12px;font-weight:normal;color:#fff;transform:scaleX(0.89);">0.03%</div>
<div class="t" style="left:170.2px;top:134.34px;font-size:12px;line-height:12px;font-weight:normal;color:#fff;transform:scaleX(0.89);">0xC745FC00000000</div>
<div class="t" style="left:282.7px;top:134.34px;font-size:12px;line-height:12px;font-weight:normal;color:#fff;transform:scaleX(0.89);">mov</div>
<div class="t" style="left:320.5px;top:134.34px;font-size:12px;line-height:12px;font-weight:normal;color:#fff;transform:scaleX(0.89);">DWORD PTR [ebp-4], 0</div>
<div class="t" style="left:487.7px;top:134.34px;font-size:12px;line-height:12px;font-weight:normal;color:#fff;transform:scaleX(0.89);">1</div>
<div class="t" style="left:533.7px;top:134.34px;font-size:12px;line-height:12px;font-weight:normal;color:#fff;transform:scaleX(0.89);">2</div>
<div class="t" style="left:170.2px;top:152.34px;font-size:12px;line-height:12px;font-weight:normal;color:#000;transform:scaleX(0.89);">0xE903000000</div>
<div class="t" style="left:282.7px;top:152.34px;font-size:12px;line-height:12px;font-weight:normal;color:#000;transform:scaleX(0.89);">jmp</div>
<div class="t" style="left:316.7px;top:152.34px;font-size:12px;line-height:12px;font-weight:normal;color:#000;transform:scaleX(0.89);">test_if+18 (1018h)</div>
<div class="t" style="left:533.7px;top:152.34px;font-size:12px;line-height:12px;font-weight:normal;color:#000;transform:scaleX(0.89);">1</div>
<div class="t" style="left:35.2px;top:176.34px;font-size:12px;line-height:12px;font-weight:normal;color:#000;transform:scaleX(0.89);">test_if+15:</div>
<div class="t" style="left:122.2px;top:176.34px;font-size:12px;line-height:12px;font-weight:normal;color:#000;transform:scaleX(0.89);">1.91%</div>
<div class="t" style="left:170.2px;top:176.34px;font-size:12px;line-height:12px;font-weight:normal;color:#000;transform:scaleX(0.89);">0xFF45FC</div>
<div class="t" style="left:282.7px;top:176.34px;font-size:12px;line-height:12px;font-weight:normal;color:#000;transform:scaleX(0.89);">inc</div>
<div class="t" style="left:314.09999999999997px;top:176.34px;font-size:12px;line-height:12px;font-weight:normal;color:#000;transform:scaleX(0.89);">DWORD PTR [ebp-4]</div>
<div class="t" style="left:487.7px;top:176.34px;font-size:12px;line-height:12px;font-weight:normal;color:#000;transform:scaleX(0.89);">3</div>
<div class="t" style="left:533.7px;top:176.34px;font-size:12px;line-height:12px;font-weight:normal;color:#000;transform:scaleX(0.89);">4</div>
<div class="t" style="left:35.2px;top:200.34px;font-size:12px;line-height:12px;font-weight:normal;color:#000;transform:scaleX(0.89);">test_if+18:</div>
<div class="t" style="left:122.2px;top:200.34px;font-size:12px;line-height:12px;font-weight:normal;color:#000;transform:scaleX(0.89);">0.01%</div>
<div class="t" style="left:170.2px;top:200.34px;font-size:12px;line-height:12px;font-weight:normal;color:#000;transform:scaleX(0.89);">0x8B4514</div>
<div class="t" style="left:282.7px;top:200.34px;font-size:12px;line-height:12px;font-weight:normal;color:#000;transform:scaleX(0.89);">mov</div>
<div class="t" style="left:320.5px;top:200.34px;font-size:12px;line-height:12px;font-weight:normal;color:#000;transform:scaleX(0.89);">eax, DWORD PTR [ebp+20]</div>
<div class="t" style="left:487.7px;top:200.34px;font-size:12px;line-height:12px;font-weight:normal;color:#000;transform:scaleX(0.89);">1</div>
<div class="t" style="left:533.7px;top:200.34px;font-size:12px;line-height:12px;font-weight:normal;color:#000;transform:scaleX(0.89);">1</div>
<div class="t" style="left:122.2px;top:224.34px;font-size:12px;line-height:12px;font-weight:normal;color:#800080;transform:scaleX(0.89);">15.73%</div>
<div class="t" style="left:170.2px;top:224.34px;font-size:12px;line-height:12px;font-weight:normal;color:#000;transform:scaleX(0.89);">0x3945FC</div>
<div class="t" style="left:282.7px;top:224.34px;font-size:12px;line-height:12px;font-weight:normal;color:#000;transform:scaleX(0.89);">cmp</div>
<div class="t" style="left:320.5px;top:224.34px;font-size:12px;line-height:12px;font-weight:normal;color:#000;transform:scaleX(0.89);">DWORD PTR [ebp-4], eax</div>
<div class="t" style="left:487.7px;top:224.34px;font-size:12px;line-height:12px;font-weight:normal;color:#000;transform:scaleX(0.89);">2</div>
<div class="t" style="left:533.7px;top:224.34px;font-size:12px;line-height:12px;font-weight:normal;color:#000;transform:scaleX(0.89);">2</div>
<div class="t" style="left:170.2px;top:242.34px;font-size:12px;line-height:12px;font-weight:normal;color:#000;transform:scaleX(0.89);">0x0F8D4D000000</div>
<div class="t" style="left:282.7px;top:242.34px;font-size:12px;line-height:12px;font-weight:normal;color:#000;transform:scaleX(0.89);">jge</div>
<div class="t" style="left:314.09999999999997px;top:242.34px;font-size:12px;line-height:12px;font-weight:normal;color:#000;transform:scaleX(0.89);">test_if+71 (1071h)</div>
<div class="t" style="left:533.7px;top:242.34px;font-size:12px;line-height:12px;font-weight:normal;color:#000;transform:scaleX(0.89);">1</div>
<div class="t" style="left:35.2px;top:266.34px;font-size:12px;line-height:12px;font-weight:normal;color:#000;transform:scaleX(0.89);">test_if+24:</div>
<div class="t" style="left:122.2px;top:266.34px;font-size:12px;line-height:12px;font-weight:normal;color:#000;transform:scaleX(0.89);">3.30%</div>
<div class="t" style="left:170.2px;top:266.34px;font-size:12px;line-height:12px;font-weight:normal;color:#000;transform:scaleX(0.89);">0x833D3CC7400001</div>
<div class="t" style="left:282.7px;top:266.34px;font-size:12px;line-height:12px;font-weight:normal;color:#000;transform:scaleX(0.89);">cmp</div>
<div class="t" style="left:320.5px;top:266.34px;font-size:12px;line-height:12px;font-weight:normal;color:#000;transform:scaleX(0.89);">DWORD PTR [putp (273ch)], 1</div>
<div class="t" style="left:487.7px;top:266.34px;font-size:12px;line-height:12px;font-weight:normal;color:#000;transform:scaleX(0.89);">2</div>
<div class="t" style="left:533.7px;top:266.34px;font-size:12px;line-height:12px;font-weight:normal;color:#000;transform:scaleX(0.89);">2</div>
<div class="t" style="left:122.2px;top:284.34px;font-size:12px;line-height:12px;font-weight:normal;color:#000;transform:scaleX(0.89);">3.35%</div>
<div class="t" style="left:170.2px;top:284.34px;font-size:12px;line-height:12px;font-weight:normal;color:#000;transform:scaleX(0.89);">0x0F8520000000</div>
<div class="t" style="left:282.7px;top:284.34px;font-size:12px;line-height:12px;font-weight:normal;color:#000;transform:scaleX(0.89);">jnz</div>
<div class="t" style="left:312.8px;top:284.34px;font-size:12px;line-height:12px;font-weight:normal;color:#000;transform:scaleX(0.89);">test_if+51 (1051h)</div>
<div class="t" style="left:533.7px;top:284.34px;font-size:12px;line-height:12px;font-weight:normal;color:#000;transform:scaleX(0.89);">1</div>
<div class="t" style="left:35.2px;top:308.34px;font-size:12px;line-height:12px;font-weight:normal;color:#000;transform:scaleX(0.89);">test_if+31:</div>
<div class="t" style="left:122.2px;top:308.34px;font-size:12px;line-height:12px;font-weight:normal;color:#000;transform:scaleX(0.89);">1.60%</div>
<div class="t" style="left:170.2px;top:308.34px;font-size:12px;line-height:12px;font-weight:normal;color:#000;transform:scaleX(0.89);">0x8B45FC</div>
<div class="t" style="left:282.7px;top:308.34px;font-size:12px;line-height:12px;font-weight:normal;color:#000;transform:scaleX(0.89);">mov</div>
<div class="t" style="left:320.5px;top:308.34px;font-size:12px;line-height:12px;font-weight:normal;color:#000;transform:scaleX(0.89);">eax, DWORD PTR [ebp-4]</div>
<div class="t" style="left:487.7px;top:308.34px;font-size:12px;line-height:12px;font-weight:normal;color:#000;transform:scaleX(0.89);">1</div>
<div class="t" style="left:533.7px;top:308.34px;font-size:12px;line-height:12px;font-weight:normal;color:#000;transform:scaleX(0.89);">1</div>
<div class="t" style="left:170.2px;top:326.34px;font-size:12px;line-height:12px;font-weight:normal;color:#000;transform:scaleX(0.89);">0x8B4D10</div>
<div class="t" style="left:282.7px;top:326.34px;font-size:12px;line-height:12px;font-weight:normal;color:#000;transform:scaleX(0.89);">mov</div>
<div class="t" style="left:320.5px;top:326.34px;font-size:12px;line-height:12px;font-weight:normal;color:#000;transform:scaleX(0.89);">ecx, DWORD PTR [ebp+16]</div>
<div class="t" style="left:533.7px;top:326.34px;font-size:12px;line-height:12px;font-weight:normal;color:#000;transform:scaleX(0.89);">1</div>
<div class="t" style="left:122.2px;top:344.34px;font-size:12px;line-height:12px;font-weight:normal;color:#000;transform:scaleX(0.89);">1.96%</div>
<div class="t" style="left:170.2px;top:344.34px;font-size:12px;line-height:12px;font-weight:normal;color:#000;transform:scaleX(0.89);">0x8B0481</div>
<div class="t" style="left:282.7px;top:344.34px;font-size:12px;line-height:12px;font-weight:normal;color:#000;transform:scaleX(0.89);">mov</div>
<div class="t" style="left:320.5px;top:344.34px;font-size:12px;line-height:12px;font-weight:normal;color:#000;transform:scaleX(0.89);">eax, DWORD PTR [ecx+eax*4]</div>
<div class="t" style="left:487.7px;top:344.34px;font-size:12px;line-height:12px;font-weight:normal;color:#000;transform:scaleX(0.89);">2</div>
<div class="t" style="left:533.7px;top:344.34px;font-size:12px;line-height:12px;font-weight:normal;color:#000;transform:scaleX(0.89);">1</div>
<div class="t" style="left:572.7px;top:344.34px;font-size:12px;line-height:12px;font-weight:normal;color:#000;transform:scaleX(0.89);">Exp_AGI_U_P</div>
<div class="t" style="left:170.2px;top:368.34px;font-size:12px;line-height:12px;font-weight:normal;color:#000;transform:scaleX(0.89);">0x8B45FC</div>
<div class="t" style="left:282.7px;top:368.34px;font-size:12px;line-height:12px;font-weight:normal;color:#000;transform:scaleX(0.89);">mov</div>
<div class="t" style="left:320.5px;top:368.34px;font-size:12px;line-height:12px;font-weight:normal;color:#000;transform:scaleX(0.89);">eax, DWORD PTR [ebp-4]</div>
<div class="t" style="left:487.7px;top:368.34px;font-size:12px;line-height:12px;font-weight:normal;color:#000;transform:scaleX(0.89);">1</div>
<div class="t" style="left:533.7px;top:368.34px;font-size:12px;line-height:12px;font-weight:normal;color:#000;transform:scaleX(0.89);">1</div>
<svg style="left:0px;top:0px" width="40" height="370"><defs><pattern id="dots" x="0" y="0" width="2" height="2" patternUnits="userSpaceOnUse"><rect width="2" height="2" fill="#ffd800"/><rect x="0" y="0" width="1" height="1" fill="#902000"/></pattern></defs><rect x="0" y="0" width="8" height="18" fill="#ff0000"/><rect x="0" y="18" width="8" height="18" fill="#ff0000"/><path d="M1 19h7v15z" fill="url(#dots)"/><rect x="8" y="36" width="8" height="24" fill="#0000ff"/><rect x="0" y="60" width="8" height="24" fill="#ffcc00"/><rect x="0" y="64" width="8" height="16" fill="url(#dots)"/><rect x="8" y="84" width="8" height="24" fill="#0000ff"/><rect x="0" y="108" width="8" height="24" fill="#ffcc00"/><rect x="0" y="112" width="8" height="16" fill="url(#dots)"/><rect x="0" y="132" width="8" height="18" fill="#ff0000"/><path d="M1 133h7v15z" fill="url(#dots)"/><rect x="8" y="150" width="8" height="24" fill="#0000ff"/><rect x="0" y="174" width="8" height="24" fill="#ffcc00"/><rect x="0" y="178" width="8" height="16" fill="url(#dots)"/><rect x="0" y="198" width="8" height="24" fill="#ff0000"/><rect x="0" y="222" width="8" height="18" fill="#ff0000"/><path d="M1 223h7v15z" fill="url(#dots)"/><rect x="8" y="240" width="8" height="24" fill="#0000ff"/><rect x="0" y="264" width="8" height="18" fill="#ffcc00"/><rect x="0" y="268" width="8" height="10" fill="url(#dots)"/><rect x="8" y="282" width="8" height="24" fill="#0000ff"/><rect x="0" y="306" width="8" height="18" fill="#ffcc00"/><rect x="0" y="310" width="8" height="10" fill="url(#dots)"/><rect x="8" y="324" width="8" height="18" fill="#0000ff"/><rect x="0" y="342" width="8" height="24" fill="#ffcc00"/><rect x="0" y="346" width="8" height="16" fill="url(#dots)"/><rect x="8" y="366" width="8" height="18" fill="#0000ff"/><path d="M22.4 1.5L20.2 3.8V20.200000000000003L17.8 24.700000000000003L20.2 29.200000000000003V48.5L22.4 51" fill="none" stroke="#0000c0" stroke-width="1.8"/><path d="M22.4 133L20.2 135.3V162.5L22.4 165" fill="none" stroke="#0000c0" stroke-width="1.8"/><path d="M22.4 223L20.2 225.3V252.5L22.4 255" fill="none" stroke="#0000c0" stroke-width="1.8"/><path d="M22.4 265L20.2 267.3V294.5L22.4 297" fill="none" stroke="#0000c0" stroke-width="1.8"/><path d="M22.4 307L20.2 309.3V325.5L17.8 330L20.2 334.5V353.5L22.4 356" fill="none" stroke="#0000c0" stroke-width="1.8"/><path d="M22.4 367L20.2 369.3V421.5L22.4 424" fill="none" stroke="#0000c0" stroke-width="1.8"/><circle cx="28.3" cy="71.5" r="3" fill="#e00030" stroke="#800020" stroke-width="0.8"/><circle cx="28.3" cy="353" r="3" fill="#e00030" stroke="#800020" stroke-width="0.8"/></svg>
</div>
<div style="left:655px;top:74px;width:1px;height:409px;background:#000000;"></div>
<div style="left:656px;top:75px;width:15px;height:391px;background:#c0c0c0;"></div>
<div style="left:656px;top:75px;width:15px;height:15px;background:#c0c0c0;"></div>
<div style="left:656px;top:75px;width:15px;height:1px;background:#ffffff;"></div>
<div style="left:656px;top:75px;width:1px;height:15px;background:#ffffff;"></div>
<div style="left:657px;top:88px;width:14px;height:2px;background:#808080;"></div>
<div style="left:669px;top:76px;width:2px;height:14px;background:#808080;"></div>
<div style="left:656px;top:90px;width:15px;height:1px;background:#000000;"></div>
<div style="left:656px;top:91px;width:15px;height:15px;background:#c0c0c0;"></div>
<div style="left:656px;top:91px;width:15px;height:1px;background:#ffffff;"></div>
<div style="left:656px;top:91px;width:1px;height:15px;background:#ffffff;"></div>
<div style="left:657px;top:104px;width:14px;height:2px;background:#808080;"></div>
<div style="left:669px;top:92px;width:2px;height:14px;background:#808080;"></div>
<div style="left:656px;top:106px;width:15px;height:1px;background:#000000;"></div>
<div style="left:656px;top:450px;width:15px;height:1px;background:#000000;"></div>
<div style="left:656px;top:451px;width:15px;height:15px;background:#c0c0c0;"></div>
<div style="left:656px;top:451px;width:15px;height:1px;background:#ffffff;"></div>
<div style="left:656px;top:451px;width:1px;height:15px;background:#ffffff;"></div>
<div style="left:657px;top:464px;width:14px;height:2px;background:#808080;"></div>
<div style="left:669px;top:452px;width:2px;height:14px;background:#808080;"></div>
<div style="left:14px;top:466px;width:658px;height:1px;background:#000000;"></div>
<div style="left:15px;top:467px;width:656px;height:15px;background:#c0c0c0;"></div>
<div style="left:15px;top:467px;width:15px;height:15px;background:#c0c0c0;"></div>
<div style="left:15px;top:467px;width:15px;height:1px;background:#ffffff;"></div>
<div style="left:15px;top:467px;width:1px;height:15px;background:#ffffff;"></div>
<div style="left:16px;top:480px;width:14px;height:2px;background:#808080;"></div>
<div style="left:28px;top:468px;width:2px;height:14px;background:#808080;"></div>
<div style="left:30px;top:467px;width:1px;height:15px;background:#000000;"></div>
<div style="left:31px;top:467px;width:15px;height:15px;background:#c0c0c0;"></div>
<div style="left:31px;top:467px;width:15px;height:1px;background:#ffffff;"></div>
<div style="left:31px;top:467px;width:1px;height:15px;background:#ffffff;"></div>
<div style="left:32px;top:480px;width:14px;height:2px;background:#808080;"></div>
<div style="left:44px;top:468px;width:2px;height:14px;background:#808080;"></div>
<div style="left:46px;top:467px;width:1px;height:15px;background:#000000;"></div>
<div style="left:640px;top:467px;width:1px;height:15px;background:#000000;"></div>
<div style="left:641px;top:467px;width:14px;height:15px;background:#c0c0c0;"></div>
<div style="left:641px;top:467px;width:14px;height:1px;background:#ffffff;"></div>
<div style="left:641px;top:467px;width:1px;height:15px;background:#ffffff;"></div>
<div style="left:642px;top:480px;width:13px;height:2px;background:#808080;"></div>
<div style="left:653px;top:468px;width:2px;height:14px;background:#808080;"></div>
<div style="left:655px;top:467px;width:1px;height:15px;background:#000000;"></div>
<svg style="left:656px;top:75px" width="15" height="15"><path d="M7.5 4L4 7.5h2v3h3v-3h2z" fill="#000"/></svg>
<svg style="left:656px;top:451px" width="15" height="15"><path d="M7.5 11L4 7.5h2v-3h3v3h2z" fill="#000"/></svg>
<svg style="left:15px;top:467px" width="15" height="15"><path d="M4 7.5L7.5 4v2h3v3h-3v2z" fill="#000"/></svg>
<svg style="left:641px;top:467px" width="15" height="15"><path d="M10.5 7.5L7 4v2h-3v3h3v2z" fill="#000"/></svg>
<div style="left:684px;top:71px;width:132px;height:240px;background:#ffffff;"></div>
<div style="left:686px;top:73px;width:128px;height:236px;background:#808080;"></div>
<div style="left:687px;top:74px;width:126px;height:234px;background:#c0c0c0;"></div>
<div style="left:684px;top:311px;width:133px;height:1px;background:#808080;"></div>
<div style="left:816px;top:71px;width:1px;height:241px;background:#808080;"></div>
<div style="left:797px;top:80px;width:11px;height:64px;background:#ffffff;"></div>
<div style="left:797px;top:80px;width:9px;height:62px;background:#000000;"></div>
<div style="left:798px;top:81px;width:8px;height:14px;background:#ff0000;"></div>
<div style="left:798px;top:96px;width:8px;height:15px;background:#ff0000;"></div>
<svg style="left:798px;top:80px" width="8" height="62"><defs><pattern id="dots2" width="2" height="2" patternUnits="userSpaceOnUse"><rect width="2" height="2" fill="#ffd800"/><rect width="1" height="1" fill="#902000"/></pattern></defs><path d="M1 17h7v14z" fill="url(#dots2)"/><rect x="0" y="32" width="8" height="15" fill="url(#dots2)"/><rect x="0" y="47" width="7" height="15" fill="#0000ff"/></svg>
<div class="t" style="left:494.5px;width:300px;text-align:right;top:79.94px;font-size:12px;line-height:12px;color:#000;transform:scaleX(0.9);transform-origin:100% 0">Unpaired</div>
<div class="t" style="left:495px;width:300px;text-align:right;top:95.64px;font-size:12px;line-height:12px;color:#000;transform:scaleX(0.9);transform-origin:100% 0">Paired With Warning</div>
<div class="t" style="left:495px;width:300px;text-align:right;top:111.64px;font-size:12px;line-height:12px;color:#000;transform:scaleX(0.9);transform-origin:100% 0">Pairable in U-Pipe</div>
<div class="t" style="left:495px;width:300px;text-align:right;top:127.14000000000001px;font-size:12px;line-height:12px;color:#000;transform:scaleX(0.9);transform-origin:100% 0">Pairable in V-Pipe</div>
<div class="t" style="left:494px;width:300px;text-align:right;top:154.64000000000001px;font-size:12px;line-height:12px;color:#000;transform:scaleX(0.9);transform-origin:100% 0">Penalty</div>
<div class="t" style="left:494px;width:300px;text-align:right;top:176.64000000000001px;font-size:12px;line-height:12px;color:#000;transform:scaleX(0.9);transform-origin:100% 0">PentiumPro Warning</div>
<div class="t" style="left:494px;width:300px;text-align:right;top:196.94000000000003px;font-size:12px;line-height:12px;color:#000;transform:scaleX(0.9);transform-origin:100% 0">Penalty + Warning</div>
<div class="t" style="left:490px;width:300px;text-align:right;top:228.84px;font-size:12px;line-height:12px;color:#000;transform:scaleX(0.9);transform-origin:100% 0">ICache Lines</div>
<div class="t" style="left:493.5px;width:300px;text-align:right;top:241.94000000000003px;font-size:12px;line-height:12px;color:#000;transform:scaleX(0.9);transform-origin:100% 0">Boundaries</div>
<div class="t" style="left:490px;width:300px;text-align:right;top:272.64px;font-size:12px;line-height:12px;color:#000;transform:scaleX(0.9);transform-origin:100% 0">Pentium Pro</div>
<div class="t" style="left:493.5px;width:300px;text-align:right;top:285.64px;font-size:12px;line-height:12px;color:#000;transform:scaleX(0.9);transform-origin:100% 0">Decoder Groups</div>
<div style="left:797px;top:154px;width:11px;height:18px;background:#c0c0c0;"></div>
<div style="left:797px;top:154px;width:11px;height:1px;background:#000000;"></div>
<div style="left:797px;top:154px;width:1px;height:18px;background:#000000;"></div>
<div style="left:797px;top:171px;width:11px;height:1px;background:#ffffff;"></div>
<div style="left:807px;top:154px;width:1px;height:18px;background:#ffffff;"></div>
<div style="left:797px;top:173px;width:11px;height:18px;background:#c0c0c0;"></div>
<div style="left:797px;top:173px;width:11px;height:1px;background:#000000;"></div>
<div style="left:797px;top:173px;width:1px;height:18px;background:#000000;"></div>
<div style="left:797px;top:190px;width:11px;height:1px;background:#ffffff;"></div>
<div style="left:807px;top:173px;width:1px;height:18px;background:#ffffff;"></div>
<div style="left:797px;top:194px;width:11px;height:20px;background:#c0c0c0;"></div>
<div style="left:797px;top:194px;width:11px;height:1px;background:#000000;"></div>
<div style="left:797px;top:194px;width:1px;height:20px;background:#000000;"></div>
<div style="left:797px;top:213px;width:11px;height:1px;background:#ffffff;"></div>
<div style="left:807px;top:194px;width:1px;height:20px;background:#ffffff;"></div>
<div style="left:797px;top:223px;width:11px;height:35px;background:#c0c0c0;"></div>
<div style="left:797px;top:223px;width:11px;height:1px;background:#000000;"></div>
<div style="left:797px;top:223px;width:1px;height:35px;background:#000000;"></div>
<div style="left:797px;top:257px;width:11px;height:1px;background:#ffffff;"></div>
<div style="left:807px;top:223px;width:1px;height:35px;background:#ffffff;"></div>
<div style="left:796px;top:270px;width:10px;height:33px;background:#c8c8e0;"></div>
<div style="left:796px;top:270px;width:10px;height:1px;background:#000000;"></div>
<div style="left:796px;top:270px;width:1px;height:33px;background:#000000;"></div>
<div style="left:796px;top:302px;width:10px;height:1px;background:#ffffff;"></div>
<div style="left:805px;top:270px;width:1px;height:33px;background:#ffffff;"></div>
<svg style="left:797px;top:154px" width="11" height="160"><circle cx="5.3" cy="8.3" r="3" fill="#e00000" stroke="#600000" stroke-width="0.8"/><ellipse cx="5" cy="25.5" rx="2" ry="3.5" fill="#ff00ff" stroke="#800080" stroke-width="0.7"/><path d="M5 29v2" stroke="#800080" stroke-width="0.8"/><path d="M5 30.5l2.2 2.3-2.2 2.3-2.2-2.3z" fill="#ff00ff" stroke="#800080" stroke-width="0.7"/><ellipse cx="5" cy="46" rx="2" ry="3" fill="#ff00ff" stroke="#800080" stroke-width="0.6"/><circle cx="5.2" cy="54.7" r="3.4" fill="#e00000" stroke="#600000" stroke-width="0.8"/><rect x="1" y="72" width="9" height="3" fill="#909090"/><rect x="1" y="77" width="9" height="3" fill="#909090"/><rect x="1" y="81" width="9" height="2" fill="#909090"/><rect x="0" y="85" width="10" height="1" fill="#000"/><rect x="3" y="86" width="2" height="17" fill="#909090"/><rect x="7" y="86" width="2" height="17" fill="#909090"/><path d="M5.5 119L3.2 122V130.5L1 132.8L3 135V143.5L5.5 146" fill="none" stroke="#0000c0" stroke-width="1.7"/></svg>
<div style="left:4px;top:492px;width:63px;height:15px;background:#c0c0c0;"></div>
<div style="left:4px;top:492px;width:63px;height:1px;background:#ffffff;"></div>
<div style="left:4px;top:492px;width:1px;height:15px;background:#ffffff;"></div>
<div class="t" style="left:7px;top:493.84px;font-size:12px;line-height:12px;font-weight:normal;color:#000;transform:scaleX(0.87);">Blended</div>
<div style="left:50px;top:493px;width:16px;height:13px;background:#000000;"></div>
<div style="left:51px;top:494px;width:14px;height:11px;background:#c0c0c0;"></div>
<div style="left:51px;top:494px;width:13px;height:1px;background:#ffffff;"></div>
<div style="left:51px;top:494px;width:1px;height:10px;background:#ffffff;"></div>
<div style="left:63px;top:495px;width:2px;height:10px;background:#808080;"></div>
<div style="left:52px;top:503px;width:13px;height:2px;background:#808080;"></div>
<svg style="left:50px;top:493px" width="16" height="13"><path d="M6.5 2h2v4h2.5l-3.5 3.5-3.5-3.5h2.5z M3 10h9v1h-9z" fill="#000"/></svg>
<div style="left:69px;top:492px;width:734px;height:15px;background:#c0c0c0;"></div>
<div style="left:69px;top:492px;width:734px;height:1px;background:#808080;"></div>
<div style="left:69px;top:492px;width:1px;height:15px;background:#808080;"></div>
<div style="left:69px;top:506px;width:734px;height:1px;background:#ffffff;"></div>
<div style="left:802px;top:492px;width:1px;height:15px;background:#ffffff;"></div>
<svg style="left:804px;top:492px" width="18" height="15"><path d="M16 2L3 15 M16 6L7 15 M16 10L11 15" stroke="#fff" stroke-width="1"/><path d="M17 3L4 16 M17 7L8 16 M17 11L12 16" stroke="#808080" stroke-width="1.2"/></svg></body></html>
